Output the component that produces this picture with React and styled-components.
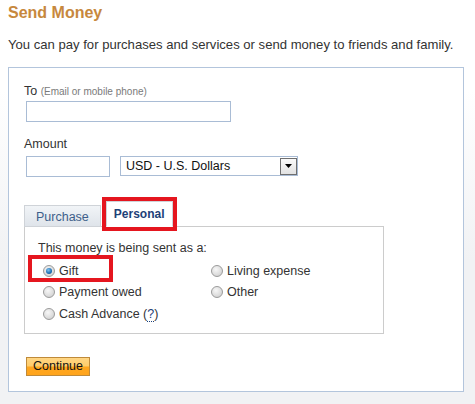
import React from "react";
import styled, { createGlobalStyle } from "styled-components";

const Global = createGlobalStyle`
  html, body { margin: 0; padding: 0; }
  body {
    width: 475px;
    height: 404px;
    overflow: hidden;
    font-family: "Liberation Sans", Arial, sans-serif;
    background: linear-gradient(180deg, #ffffff 0px, #ffffff 90px, #f1f2f4 260px, #f1f2f4 404px);
  }
`;

const Page = styled.div`
  padding: 4px 0 0 8px;
  font-size: 12px;
  color: #333;
`;

const Title = styled.h1`
  margin: 0;
  font-size: 16px;
  line-height: 18px;
  font-weight: bold;
  color: #c7883d;
`;

const Intro = styled.p`
  margin: 15px 0 0;
  font-size: 13.1px;
  line-height: 15px;
  color: #333;
`;

const FormBox = styled.div`
  box-sizing: border-box;
  width: 456px;
  margin-top: 15px;
  border: 1px solid #b3c5dc;
  background: #fff;
  padding: 16px 15px 15px 15px;
`;

const Label = styled.div`
  font-size: 12.5px;
  line-height: 14px;
  color: #333;
  margin-top: ${(p) => p.$mt || 0}px;
`;

const Hint = styled.span`
  font-size: 10px;
  color: #7a7a7a;
`;

const TextInput = styled.input`
  box-sizing: border-box;
  display: block;
  width: ${(p) => p.$w}px;
  height: 21px;
  margin: ${(p) => p.$mt || 0}px 0 0 2px;
  border: 1px solid #a9bcd5;
  background: #fff;
  padding: 0 3px;
  font: 12px "Liberation Sans", Arial, sans-serif;
`;

const AmountRow = styled.div`
  display: flex;
  align-items: flex-start;
  gap: 10px;
  margin-top: 5px;
  & > input { margin-top: 0; }
`;

const SelectBox = styled.div`
  box-sizing: border-box;
  width: 178px;
  height: 20px;
  border: 1px solid #a9bcd5;
  display: flex;
  align-items: center;
  justify-content: space-between;
  padding-left: 5px;
  font-size: 12.5px;
  color: #111;
`;

const DropButton = styled.span`
  box-sizing: border-box;
  width: 17px;
  height: 17px;
  border: 1px solid #6f6f6f;
  background: linear-gradient(180deg, #fafafa, #e2e2e2);
  display: flex;
  align-items: center;
  justify-content: center;
`;

const Tabs = styled.div`
  display: flex;
  align-items: flex-end;
  gap: 5px;
  margin-top: 24px;
`;

const Tab = styled.div`
  box-sizing: border-box;
  height: ${(p) => (p.$active ? 26 : 22)}px;
  padding: 0 ${(p) => (p.$active ? 7 : 11)}px;
  display: flex;
  align-items: ${(p) => (p.$active ? "flex-start" : "center")};
  padding-top: ${(p) => (p.$active ? 5 : 1)}px;
  font-size: ${(p) => (p.$active ? 12 : 12.5)}px;
  font-weight: ${(p) => (p.$active ? "bold" : "normal")};
  color: ${(p) => (p.$active ? "#1d4178" : "#3e5f8a")};
  background: ${(p) =>
    p.$active ? "#fff" : "linear-gradient(180deg, #f1f4f7, #dfe4ea)"};
  border: 1px solid #cfd3d8;
  border-bottom: ${(p) => (p.$active ? "1px solid #fff" : "1px solid #cfd3d8")};
  margin-bottom: -1px;
  position: relative;
  z-index: 1;
  outline: ${(p) => (p.$marked ? "4px solid #e5161f" : "none")};
`;

const Panel = styled.div`
  box-sizing: border-box;
  width: 360px;
  border: 1px solid #cccccc;
  padding: 14px 13px 8px 13px;
`;

const Prompt = styled.div`
  font-size: 12.5px;
  line-height: 14px;
  color: #333;
`;

const RadioGrid = styled.div`
  display: grid;
  grid-template-columns: 168px 1fr;
  grid-auto-rows: 21.5px;
  margin-top: 5px;
  padding-left: 5px;
`;

const Option = styled.label`
  position: relative;
  display: flex;
  align-items: center;
  gap: 4px;
  font-size: 12.5px;
  color: #333;
  grid-column: ${(p) => p.$col};
  grid-row: ${(p) => p.$row};
`;

const Radio = styled.span`
  box-sizing: border-box;
  width: 12px;
  height: 12px;
  border-radius: 50%;
  border: 1px solid #9b9b9b;
  background: radial-gradient(circle at 40% 35%, #f7f7f7 0%, #dcdcdc 60%, #c8c8c8 100%);
  display: flex;
  align-items: center;
  justify-content: center;
  flex: none;
  &::after {
    content: "";
    display: ${(p) => (p.$checked ? "block" : "none")};
    width: 6px;
    height: 6px;
    border-radius: 50%;
    background: radial-gradient(circle at 40% 35%, #7fc3ef 0%, #1b6db3 60%, #0e4f8a 100%);
  }
`;

const Mark = styled.span`
  position: absolute;
  left: -15px;
  top: -5px;
  width: 85px;
  height: 27px;
  box-sizing: border-box;
  border: 4px solid #e5161f;
  pointer-events: none;
`;

const HelpLink = styled.span`
  color: #1d4178;
  border-bottom: 1px dotted #1d4178;
`;

const ContinueButton = styled.button`
  box-sizing: border-box;
  display: block;
  margin: 23px 0 0 2px;
  width: 64px;
  height: 19px;
  padding: 0;
  border: 1px solid #bf8a3a;
  background: linear-gradient(180deg, #ffd684 0%, #ffcc6a 48%, #ffa61e 52%, #ffa41c 100%);
  font: 12.5px "Liberation Sans", Arial, sans-serif;
  color: #111;
  cursor: pointer;
`;

export default function App() {
  return (
    <>
      <Global />
      <Page>
        <Title>Send Money</Title>
        <Intro>
          You can pay for purchases and services or send money to friends and family.
        </Intro>
        <FormBox>
          <Label>
            To <Hint>(Email or mobile phone)</Hint>
          </Label>
          <TextInput $w={205} $mt={2} />
          <Label $mt={15}>Amount</Label>
          <AmountRow>
            <TextInput $w={84} />
            <SelectBox>
              <span>USD - U.S. Dollars</span>
              <DropButton>
                <svg width="7" height="4" viewBox="0 0 7 4">
                  <polygon points="0,0 7,0 3.5,4" fill="#000" />
                </svg>
              </DropButton>
            </SelectBox>
          </AmountRow>
          <Tabs>
            <Tab>Purchase</Tab>
            <Tab $active $marked>Personal</Tab>
          </Tabs>
          <Panel>
            <Prompt>This money is being sent as a:</Prompt>
            <RadioGrid>
              <Option $col={1} $row={1}>
                <Mark />
                <Radio $checked />
                Gift
              </Option>
              <Option $col={1} $row={2}>
                <Radio />
                Payment owed
              </Option>
              <Option $col={1} $row={3}>
                <Radio />
                <span>
                  Cash Advance (<HelpLink>?</HelpLink>)
                </span>
              </Option>
              <Option $col={2} $row={1}>
                <Radio />
                Living expense
              </Option>
              <Option $col={2} $row={2}>
                <Radio />
                Other
              </Option>
            </RadioGrid>
          </Panel>
          <ContinueButton>Continue</ContinueButton>
        </FormBox>
      </Page>
    </>
  );
}
